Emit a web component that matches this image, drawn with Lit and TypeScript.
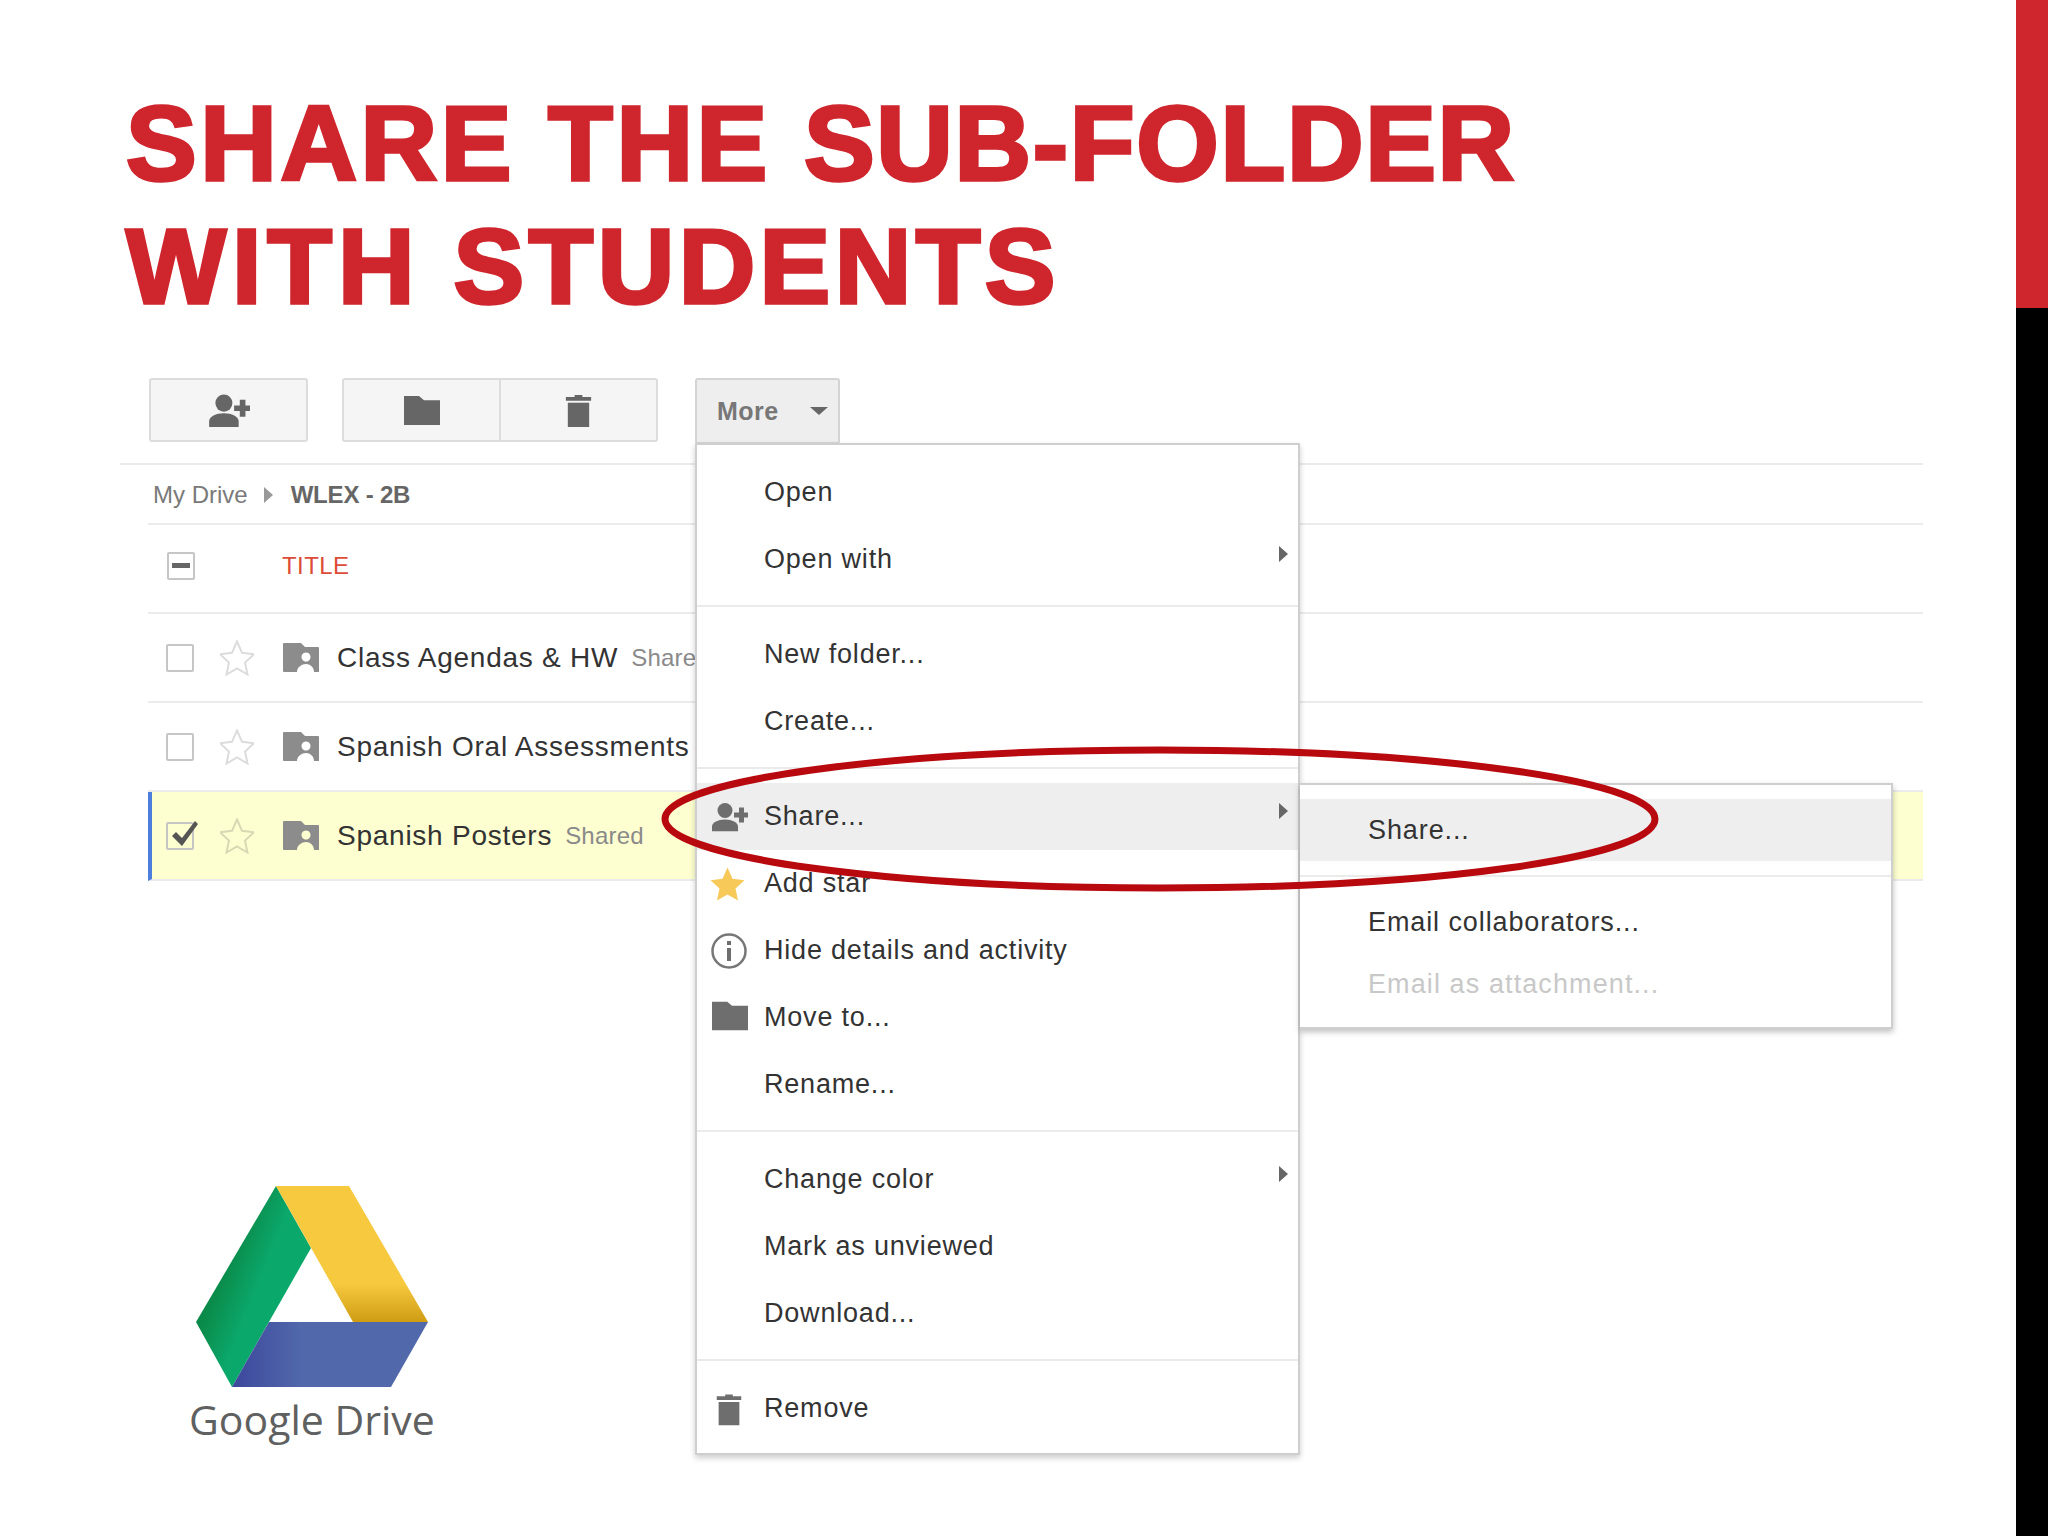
import { LitElement, css, html, svg } from 'lit';
import { customElement } from 'lit/decorators.js';

const personIcon = svg`<circle cx="14" cy="8" r="7.500"/><path d="M1 29v-5c0-4 6-7 13-7s13 3 13 7v5z"/><path d="M23 10h5V5h5v5h4v5h-4v5h-5v-5h-5z"/>`;
const folderPath = svg`<path d="M0 0h15l5 5h16v29H0z"/>`;
const trashIcon = svg`<path d="M9 2h8v2h9v4H0V4h9z"/><path d="M2 10h22v25H2z"/>`;
const starPath = 'M17 1l5 11.300 12 1.400-9 8.300 2.500 12L17 28l-10.500 6L9 22 0 13.700l12-1.400z';
const sharedFolder = svg`<path fill-rule="evenodd" d="M0 1a1 1 0 0 1 1-1h17l4 4h13a1 1 0 0 1 1 1v24h-5c0-5-4-8-8-8s-9 3-9 8H1a1 1 0 0 1-1-1zM23 9.500a4.500 4.500 0 1 0 .01 0z" />`;

type MenuItem = { label: string; icon?: 'person' | 'star' | 'info' | 'folder' | 'trash'; sub?: boolean; active?: boolean };

const menuGroups: MenuItem[][] = [
  [{ label: 'Open' }, { label: 'Open with', sub: true }],
  [{ label: 'New folder...' }, { label: 'Create...' }],
  [
    { label: 'Share...', icon: 'person', sub: true, active: true },
    { label: 'Add star', icon: 'star' },
    { label: 'Hide details and activity', icon: 'info' },
    { label: 'Move to...', icon: 'folder' },
    { label: 'Rename...' },
  ],
  [{ label: 'Change color', sub: true }, { label: 'Mark as unviewed' }, { label: 'Download...' }],
  [{ label: 'Remove', icon: 'trash' }],
];

const files = [
  { name: 'Class Agendas & HW', shared: true },
  { name: 'Spanish Oral Assessments', shared: false },
  { name: 'Spanish Posters', shared: true, selected: true },
];

@customElement('app-root')
export class AppRoot extends LitElement {
  static override styles = css`
    :host {
      display: block;
      width: 2048px;
      height: 1536px;
      overflow: hidden;
      background: #fff;
      font-family: 'Liberation Sans', Arial, sans-serif;
    }
    .slide {
      position: relative;
      display: flex;
      height: 1536px;
    }
    .main {
      flex: 1;
      padding: 82px 93px 0 120px;
    }
    .bar {
      width: 32px;
      background: #000;
    }
    .bar div {
      height: 308px;
      background: #cf252d;
    }
    h1 {
      margin: 0 0 50px 6px;
      font-size: 106px;
      line-height: 123px;
      font-weight: 700;
      color: #cf252d;
      -webkit-text-stroke: 3.5px #cf252d;
      letter-spacing: 3.6px;
      white-space: nowrap;
    }
    h1 .tight {
      letter-spacing: 1.7px;
    }
    h1 .with {
      letter-spacing: 5.9px;
    }
    h1 .students {
      letter-spacing: 4.4px;
    }
    .toolbar {
      display: flex;
      gap: 34px;
      padding-left: 29px;
      height: 87px;
      box-sizing: border-box;
      border-bottom: 2px solid #ebebeb;
    }
    .btn-group {
      display: flex;
      height: 64px;
      box-sizing: border-box;
      border: 2px solid #dcdcdc;
      border-radius: 3px;
      background: #f5f5f5;
    }
    .btn {
      display: flex;
      align-items: center;
      justify-content: center;
      width: 155px;
      fill: #666;
    }
    .btn + .btn {
      border-left: 2px solid #dcdcdc;
    }
    .more {
      margin-left: 3px;
      height: 66px;
      width: 145px;
      box-sizing: border-box;
      display: flex;
      align-items: center;
      padding-left: 20px;
      gap: 31px;
      background: #eee;
      border: 2px solid #d4d4d4;
      border-radius: 3px;
      color: #777;
      font-size: 25px;
      font-weight: 700;
      letter-spacing: 0.5px;
    }
    .caret {
      width: 0;
      height: 0;
      border: 9px solid transparent;
      border-top: 8px solid #666;
      border-bottom: 0;
    }
    .crumbs {
      display: flex;
      align-items: center;
      height: 58px;
      margin-left: 28px;
      margin-top: 2px;
      padding-left: 5px;
      border-bottom: 2px solid #ebebeb;
      font-size: 24px;
      color: #7a7a7a;
      box-sizing: border-box;
    }
    .crumbs b {
      color: #666;
      letter-spacing: -0.2px;
    }
    .crumb-arrow {
      width: 0;
      height: 0;
      margin: 0 18px 0 16px;
      border: 8px solid transparent;
      border-left: 9px solid #999;
      border-right: 0;
    }
    .list {
      margin-left: 28px;
    }
    .head,
    .row {
      display: flex;
      align-items: center;
      box-sizing: border-box;
      border-bottom: 2px solid #ebebeb;
    }
    .head {
      height: 89px;
      padding: 0 0 5px 19px;
    }
    .head .label {
      margin-left: 87px;
      color: #dd4b39;
      font-size: 24px;
      letter-spacing: 0.4px;
    }
    .row {
      height: 89px;
      padding-left: 18px;
    }
    .row.selected {
      background: #feffd0;
      border-left: 4px solid #4d7ede;
      padding-left: 14px;
    }
    .check {
      flex: none;
      position: relative;
      width: 28px;
      height: 28px;
      box-sizing: border-box;
      border: 2px solid #c6c6c6;
      border-radius: 2px;
      background: transparent;
    }
    .check svg {
      position: absolute;
      left: 0;
      top: -7px;
    }
    .check .dash {
      height: 5px;
      margin: 9px 3px;
      background: #666;
    }
    .star {
      flex: none;
      margin: 0 29px 0 26px;
      fill: none;
      stroke: #dcdcdc;
      stroke-width: 2;
    }
    .selected .star {
      stroke: #d8d8b4;
    }
    .row-folder {
      flex: none;
      margin-right: 18px;
      fill: #8c8c8c;
    }
    .name {
      font-size: 28px;
      letter-spacing: 0.75px;
      color: #333;
      white-space: nowrap;
    }
    .shared {
      margin-left: 13px;
      font-size: 24px;
      letter-spacing: 0.2px;
      color: #8a8a8a;
    }
    .logo {
      display: flex;
      flex-direction: column;
      margin: 305px 0 0 76px;
    }
    .logo span {
      margin: 4px 0 0 -7px;
      font-family: 'Open Sans', sans-serif;
      font-size: 41px;
      line-height: 50px;
      color: #5f6060;
    }
    .menu {
      position: absolute;
      left: 695px;
      top: 443px;
      width: 605px;
      height: 1012px;
      box-sizing: border-box;
      padding-top: 14px;
      background: #fff;
      border: 2px solid #cfcfcf;
      box-shadow: 0 3px 6px rgba(0, 0, 0, 0.2);
    }
    .sep {
      height: 2px;
      margin: 12px 0 14px;
      background: #ebebeb;
    }
    .item {
      position: relative;
      display: flex;
      align-items: center;
      height: 67px;
      padding-left: 67px;
      font-size: 27px;
      letter-spacing: 0.8px;
      color: #333;
    }
    .item.active {
      background: #eee;
    }
    .item-icon {
      position: absolute;
      left: 14px;
      top: 50%;
      transform: translateY(-50%);
      fill: #6e6e6e;
    }
    .item-icon.gold {
      left: 13px;
      fill: #f6c958;
    }
    .item-icon.folder {
      left: 15px;
      top: 48%;
    }
    .item-icon.trash {
      left: 19px;
    }
    .sub-arrow {
      position: absolute;
      right: 10px;
      top: 20px;
      width: 0;
      height: 0;
      border: 8px solid transparent;
      border-left: 9px solid #666;
      border-right: 0;
    }
    .submenu {
      position: absolute;
      left: 1300px;
      top: 783px;
      width: 593px;
      height: 246px;
      box-sizing: border-box;
      padding-top: 14px;
      background: #fff;
      border: 2px solid #cfcfcf;
      border-left: 0;
      box-shadow: 0 3px 6px rgba(0, 0, 0, 0.25);
    }
    .submenu .item {
      height: 62px;
      padding-left: 68px;
      letter-spacing: 0.9px;
    }
    .submenu .sep {
      margin: 14px 0 0;
    }
    .submenu .collab {
      margin-top: 14px;
    }
    .submenu .disabled {
      color: #c8c8c8;
      letter-spacing: 1.1px;
    }
    .oval {
      position: absolute;
      left: 0;
      top: 0;
      pointer-events: none;
    }
  `;

  private renderIcon(icon?: MenuItem['icon']) {
    switch (icon) {
      case 'person':
        return html`<svg class="item-icon" width="37" height="29" viewBox="0 0 37 29">${personIcon}</svg>`;
      case 'star':
        return html`<svg class="item-icon gold" width="35" height="35" viewBox="0 0 34 35"><path d=${starPath} /></svg>`;
      case 'info':
        return html`<svg class="item-icon" width="36" height="36" viewBox="0 0 36 36">
          <circle cx="18" cy="18" r="16.500" fill="none" stroke="#777" stroke-width="2.500" />
          <path d="M16 8h4v4h-4zM16 15h4v13h-4z" />
        </svg>`;
      case 'folder':
        return html`<svg class="item-icon folder" width="36" height="29" viewBox="0 0 36 34" preserveAspectRatio="none">${folderPath}</svg>`;
      case 'trash':
        return html`<svg class="item-icon trash" width="26" height="33" viewBox="0 0 26 35">${trashIcon}</svg>`;
      default:
        return null;
    }
  }

  private renderItem(item: MenuItem) {
    return html`<div class="item ${item.active ? 'active' : ''}">
      ${this.renderIcon(item.icon)}${item.label}${item.sub ? html`<i class="sub-arrow"></i>` : null}
    </div>`;
  }

  override render() {
    return html`
      <div class="slide">
        <div class="main">
          <h1>SHARE THE <span class="tight">SUB-FOLDER</span><br /><span class="with">WITH</span> <span class="students">STUDENTS</span></h1>
          <div class="toolbar">
            <div class="btn-group">
              <div class="btn"><svg width="42" height="33" viewBox="0 0 37 29">${personIcon}</svg></div>
            </div>
            <div class="btn-group">
              <div class="btn"><svg width="36" height="29" viewBox="0 0 36 34" preserveAspectRatio="none">${folderPath}</svg></div>
              <div class="btn"><svg width="27" height="34" viewBox="0 0 26 35">${trashIcon}</svg></div>
            </div>
            <div class="more">More<i class="caret"></i></div>
          </div>
          <div class="crumbs">My Drive<i class="crumb-arrow"></i><b>WLEX - 2B</b></div>
          <div class="list">
            <div class="head">
              <div class="check"><div class="dash"></div></div>
              <div class="label">TITLE</div>
            </div>
            ${files.map(
              (f) => html`<div class="row ${f.selected ? 'selected' : ''}">
                <div class="check">
                  ${f.selected
                    ? html`<svg width="32" height="32" viewBox="0 0 32 32"><path d="M4 19l4-4 6 6L27 4l3 3-16 22z" fill="#555" /></svg>`
                    : null}
                </div>
                <svg class="star" width="34" height="36" viewBox="0 0 34 35"><path d=${starPath} /></svg>
                <svg class="row-folder" width="36" height="29" viewBox="0 0 36 29">${sharedFolder}</svg>
                <span class="name">${f.name}</span>
                ${f.shared ? html`<span class="shared">Shared</span>` : null}
              </div>`
            )}
          </div>
          <div class="logo">
            <svg width="240" height="204" viewBox="195 1186 240 204">
              <defs>
                <linearGradient id="g" x1="0" y1="0" x2="1" y2="0.7">
                  <stop offset="0" stop-color="#0a8a48" />
                  <stop offset="0.35" stop-color="#0a8a48" />
                  <stop offset="0.6" stop-color="#0ba86c" />
                </linearGradient>
                <linearGradient id="y" x1="0" y1="0" x2="0" y2="1">
                  <stop offset="0" stop-color="#f6c93f" />
                  <stop offset="0.72" stop-color="#f6c93f" />
                  <stop offset="1" stop-color="#cf9c12" />
                </linearGradient>
                <linearGradient id="b" x1="0" y1="0" x2="1" y2="0">
                  <stop offset="0" stop-color="#3c479c" />
                  <stop offset="0.35" stop-color="#5168ab" />
                </linearGradient>
              </defs>
              <path d="M275 1186L195 1322l36 65 79-139z" fill="url(#g)" />
              <path d="M275 1186h73l79 136h-75z" fill="url(#y)" />
              <path d="M268 1322h159l-37 65H231z" fill="url(#b)" />
            </svg>
            <span>Google Drive</span>
          </div>
        </div>
        <div class="bar"><div></div></div>

        <div class="menu">
          ${menuGroups.map(
            (group, i) => html`${i ? html`<div class="sep"></div>` : null}${group.map((it) => this.renderItem(it))}`
          )}
        </div>
        <div class="submenu">
          <div class="item active">Share...</div>
          <div class="sep"></div>
          <div class="item collab">Email collaborators...</div>
          <div class="item disabled">Email as attachment...</div>
        </div>
        <svg class="oval" width="2048" height="1536">
          <ellipse cx="1160" cy="819" rx="495" ry="69" fill="none" stroke="#b8090f" stroke-width="7" />
        </svg>
      </div>
    `;
  }
}
